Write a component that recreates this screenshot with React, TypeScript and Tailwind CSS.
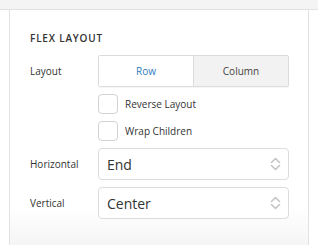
const ChevronUpDown = () => (
  <svg width="11" height="14" viewBox="0 0 11 14" fill="none" stroke="#c4c4c4" strokeWidth="1.6" strokeLinecap="round" strokeLinejoin="round">
    <path d="M1.5 5.5 5.5 1.5 9.5 5.5" />
    <path d="M1.5 8.5 5.5 12.5 9.5 8.5" />
  </svg>
)

function Row({ label, children, className = '' }: { label?: string; children: React.ReactNode; className?: string }) {
  return (
    <div className={`flex items-center ${className}`}>
      <div className="w-[68px] shrink-0 text-[10px] text-[#333]">{label}</div>
      <div className="flex-1">{children}</div>
    </div>
  )
}

function Checkbox({ label }: { label: string }) {
  return (
    <div className="flex items-center gap-[7px]">
      <span className="w-5 h-5 rounded-[4px] border border-[#d2d2d2] bg-white" />
      <span className="text-[10px] text-[#333]">{label}</span>
    </div>
  )
}

function Select({ value }: { value: string }) {
  return (
    <div className="h-8 flex items-center justify-between pl-[8px] pr-[7px] rounded-[4px] border border-[#dcdcdc] bg-white">
      <span className="text-[14px] text-[#333]">{value}</span>
      <ChevronUpDown />
    </div>
  )
}

export default function App() {
  return (
    <div className="w-[318px] h-[245px] flex flex-col bg-white font-['Open_Sans',sans-serif] overflow-hidden">
      <div className="h-[10px] shrink-0 bg-[#f4f4f4] border-b border-[#e2e2e2]" />
      <div className="flex-1 mx-[9px] border-x border-[#e2e2e2] bg-[linear-gradient(to_bottom,#fff_84%,#f5f5f5)] pl-5 pr-[19px] pt-[21px]">
        <div className="text-[10px] leading-[14px] font-semibold tracking-[0.08em] text-[#333]">FLEX LAYOUT</div>
        <Row label="Layout" className="mt-[10px]">
          <div className="h-8 flex rounded-[2px] border border-[#dcdcdc] shadow-[0_1px_1px_rgba(0,0,0,0.04)] text-[10px]">
            <div className="flex-1 flex items-center justify-center bg-white text-[#2f7bbd] border-r border-[#dcdcdc]">Row</div>
            <div className="flex-1 flex items-center justify-center bg-[#f2f2f2] text-[#444]">Column</div>
          </div>
        </Row>
        <Row className="mt-[7px]">
          <Checkbox label="Reverse Layout" />
        </Row>
        <Row className="mt-[7px]">
          <Checkbox label="Wrap Children" />
        </Row>
        <Row label="Horizontal" className="mt-[7px]">
          <Select value="End" />
        </Row>
        <Row label="Vertical" className="mt-[7px]">
          <Select value="Center" />
        </Row>
      </div>
    </div>
  )
}
